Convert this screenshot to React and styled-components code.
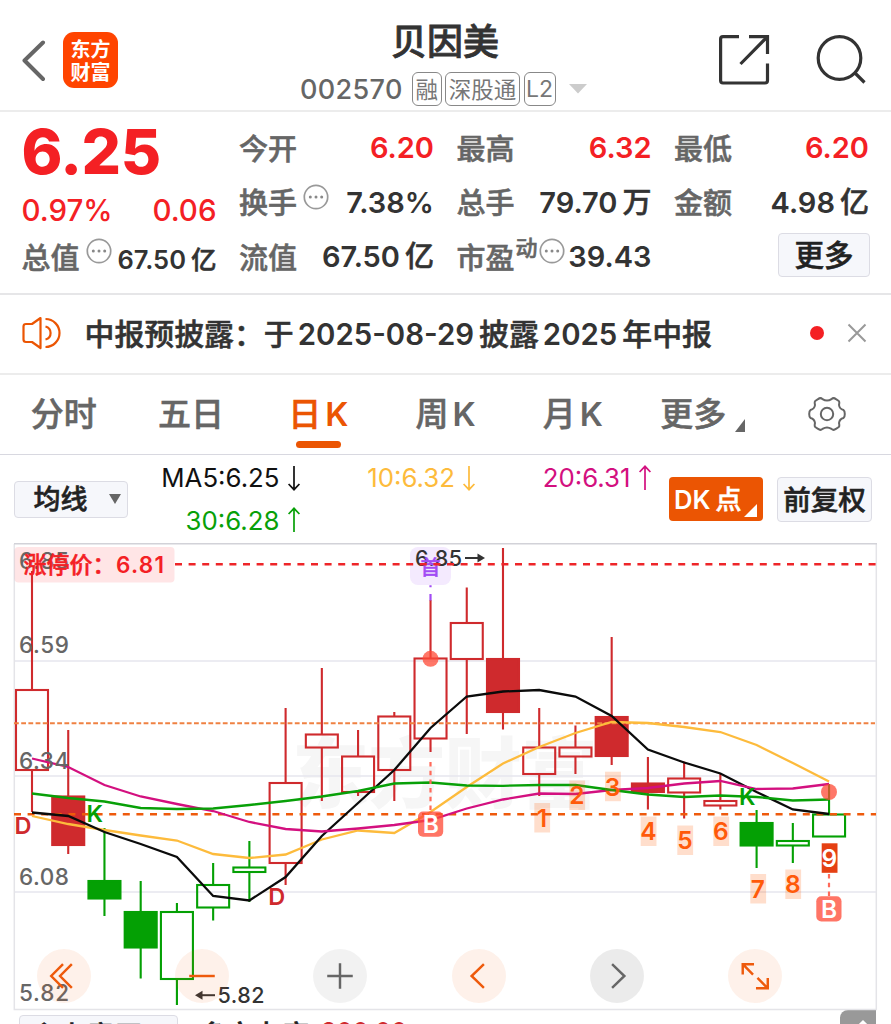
import React from "react";
import styled, { createGlobalStyle, css } from "styled-components";

const RED = "#f42024";
const ORANGE = "#eb5503";
const UP = "#cf2a2d";
const DOWN = "#04a004";

const STEP = 36.23;
const xOf = (i) => 32 + i * STEP;

// high, body top, body bottom, low, colour, filled
const candles = [
  [571, 690, 770, 812, UP, false],
  [730, 796.5, 845, 854, UP, true],
  [828, 881, 898.5, 916, DOWN, true],
  [881, 912, 947.5, 978.5, DOWN, true],
  [903, 912, 979, 1005, DOWN, false],
  [863, 885, 907.5, 920.5, DOWN, false],
  [841, 867.5, 872, 902, DOWN, false],
  [708, 783, 863, 885, UP, false],
  [668, 734.5, 747.5, 801, UP, false],
  [730, 756.5, 792, 796, UP, false],
  [712, 716.5, 770, 801, UP, false],
  [600, 658.5, 738.5, 752, UP, false],
  [587.5, 623, 659, 734, UP, false],
  [548, 659, 712, 729.5, UP, true],
  [708, 747.5, 774, 796, UP, false],
  [725.5, 747.5, 756.5, 774, UP, false],
  [637, 717, 756, 765, UP, true],
  [757, 783.5, 792, 809.5, UP, true],
  [761.5, 778.5, 792.5, 818.5, UP, false],
  [774, 801, 805.5, 809.5, UP, false],
  [810, 823, 845.5, 868, DOWN, true],
  [823, 841, 845.5, 863, DOWN, false],
  [784, 814.5, 836.5, 836.5, DOWN, false],
];

const averages = [
  {
    color: "#fdbb3c",
    points: [
      816, 824, 830, 835.5, 840.5, 854, 858, 854.5, 839.5, 830.5, 833, 812, 787,
      763.5, 747, 733, 722, 723, 727, 732, 745, 763, 781.5,
    ],
  },
  {
    color: "#0b0b0b",
    points: [
      812.5, 816, 832, 844, 857, 896, 900.5, 877, 836, 803, 770, 728, 696.5,
      691.5, 690, 696.5, 716, 749.5, 762.5, 773.5, 792, 809.5, 814,
    ],
  },
  {
    color: "#d3107f",
    points: [
      758.5, 767, 785, 796.5, 804, 811, 822, 829, 831.5, 828.5, 825, 820, 808.5,
      799.5, 793.5, 794, 790, 788, 783.5, 781, 789, 788.5, 784,
    ],
  },
  {
    color: "#08a008",
    points: [
      793.5, 798, 801.5, 808, 809, 808.5, 805, 801, 796.5, 791, 783.5, 782.5,
      785.5, 785.8, 785, 785, 790, 794.5, 797, 795.5, 797, 800.5, 799.5,
    ],
  },
];

// top left corner of each counter box
const counts = [
  [534.3, 803],
  [569.3, 780.5],
  [605, 771.7],
  [640.7, 816.5],
  [677.3, 825.5],
  [713.3, 816.5],
  [750.3, 874],
  [785.3, 869.5],
  [821.7, 843.3],
];

const axis = [
  ["6.85", 568.6],
  ["6.59", 653.2],
  ["6.34", 769.4],
  ["6.08", 885.4],
  ["5.82", 1001.4],
];

const Dots = () => (
  <DotsIcon viewBox="0 0 26 26">
    <circle cx="13" cy="13" r="11.7" fill="none" stroke="#999" strokeWidth="1.7" />
    <circle cx="7.3" cy="13" r="1.5" fill="#888" />
    <circle cx="13" cy="13" r="1.5" fill="#888" />
    <circle cx="18.7" cy="13" r="1.5" fill="#888" />
  </DotsIcon>
);

const Arrow = ({ up }) => (
  <svg width="14" height="26" viewBox="0 0 14 26">
    <path
      d={up ? "M7 25V1.5M1.6 7L7 1.3L12.4 7" : "M7 1V24.5M1.6 19L7 24.7L12.4 19"}
      fill="none"
      stroke="currentColor"
      strokeWidth="1.7"
    />
  </svg>
);

const Header = () => (
  <TopBar>
    <BackIcon viewBox="0 0 24 42">
      <path d="M21 2.5L2.5 20.5L21 39" fill="none" stroke="#666" strokeWidth="4" strokeLinecap="round" strokeLinejoin="round" />
    </BackIcon>
    <Logo>
      <span>东方</span>
      <span>财富</span>
    </Logo>
    <Stock>
      <StockName>贝因美</StockName>
      <CodeRow>
        <Code>002570</Code>
        <Tag $w={29.5}>融</Tag>
        <Tag $w={75}>深股通</Tag>
        <Tag $w={32} $latin>L2</Tag>
        <Caret viewBox="0 0 18 10">
          <path d="M0 0H18L9 9.5Z" fill="#ccc" />
        </Caret>
      </CodeRow>
    </Stock>
    <Actions>
      <svg width="52" height="52" viewBox="0 0 52 52" fill="none" stroke="#333" strokeWidth="3.2">
        <path d="M21 2.6H5Q2.6 2.6 2.6 5V46.5Q2.6 49 5 49H47Q49.5 49 49.5 46.5V29.5" />
        <path d="M31 2.6H49.5V20M48.5 3.6L22.5 30" />
      </svg>
      <svg width="52" height="52" viewBox="0 0 52 52" fill="none" stroke="#333" strokeWidth="3.2">
        <circle cx="23.500" cy="24" r="21.3" />
        <path d="M38.500 38.5L48.500 48.5" />
      </svg>
    </Actions>
  </TopBar>
);

const Quote = () => (
  <QuoteGrid>
    <Column>
      <Price>6.25</Price>
      <Change>
        <span>0.97%</span>
        <span>0.06</span>
      </Change>
      <Cell>
        <Label>总值</Label>
        <Dots />
        <Value $size={25.5} $low>67.50<Unit>亿</Unit></Value>
      </Cell>
    </Column>
    <Column>
      <Cell><Label>今开</Label><Value $red>6.20</Value></Cell>
      <Cell><Label>换手</Label><Dots /><Value>7.38%</Value></Cell>
      <Cell><Label>流值</Label><Value>67.50<Unit>亿</Unit></Value></Cell>
    </Column>
    <Column>
      <Cell><Label>最高</Label><Value $red>6.32</Value></Cell>
      <Cell><Label>总手</Label><Value>79.70<Unit>万</Unit></Value></Cell>
      <Cell>
        <Label>市盈</Label>
        <Super>动</Super>
        <Dots />
        <Value>39.43</Value>
      </Cell>
    </Column>
    <Column>
      <Cell><Label>最低</Label><Value $red>6.20</Value></Cell>
      <Cell><Label>金额</Label><Value>4.98<Unit>亿</Unit></Value></Cell>
      <Cell $end><MoreButton>更多</MoreButton></Cell>
    </Column>
  </QuoteGrid>
);

const Notice = () => (
  <NoticeBar>
    <svg width="40" height="34" viewBox="0 0 40 34" fill="none" stroke={ORANGE} strokeWidth="2.2" strokeLinejoin="round">
      <path d="M18.5 2L10 8H4Q1.5 8 1.5 10.5V23.5Q1.5 26 4 26H10L18.5 32Z" />
      <path d="M23.5 3A14 14 0 0 1 23.5 31M23.5 10.5A6.7 6.7 0 0 1 23.5 23.5" />
    </svg>
    <NoticeText>
      中报预披露：于<Num>2025-08-29</Num>披露<Num>2025</Num>年中报
    </NoticeText>
    <RedDot />
    <svg width="20" height="20" viewBox="0 0 20 20" stroke="#999" strokeWidth="2">
      <path d="M1.5 1.5L18.5 18.5M18.5 1.5L1.5 18.5" />
    </svg>
  </NoticeBar>
);

const Tabs = () => (
  <TabBar>
    <Tab><span>分时</span></Tab>
    <Tab><span>五日</span></Tab>
    <Tab $active><span>日<b>K</b></span></Tab>
    <Tab><span>周<b>K</b></span></Tab>
    <Tab><span>月<b>K</b></span></Tab>
    <Tab $shift={5}>
      <span>更多</span>
      <Corner viewBox="0 0 10 13"><path d="M10 0V13H0Z" fill="#666" /></Corner>
    </Tab>
    <Tab>
      <svg width="38" height="36" viewBox="0 0 38 36" fill="none" stroke="#666" strokeWidth="2">
        <path d="M14.5 3.2Q19 6 23.5 3.2Q25.5 1 28 3.2L30.8 5Q31.7 6.2 31 9Q31.5 13 35.5 14Q36.8 15 36.8 18Q36.8 21 35.5 22Q31.5 23 31 27Q31.7 29.8 30.8 31L28 32.8Q25.5 35 23.5 32.8Q19 30 14.5 32.8Q12.5 35 10 32.8L7.2 31Q6.3 29.8 7 27Q6.5 23 2.5 22Q1.2 21 1.2 18Q1.2 15 2.5 14Q6.5 13 7 9Q6.3 6.2 7.2 5L10 3.2Q12.5 1 14.5 3.2Z" strokeLinejoin="round" />
        <circle cx="19" cy="18" r="6.2" />
      </svg>
    </Tab>
  </TabBar>
);

const Indicators = () => (
  <IndicatorBar>
    <Select>
      <span>均线</span>
      <svg width="12" height="10" viewBox="0 0 12 10"><path d="M0 0H12L6 10Z" fill="#666" /></svg>
    </Select>
    <Averages>
      <Average $color="#111">MA5:6.25<Arrow /></Average>
      <Average $color="#fdbb3c">10:6.32<Arrow /></Average>
      <Average $color="#d3107f">20:6.31<Arrow up /></Average>
      <Average $color="#08a008">30:6.28<Arrow up /></Average>
    </Averages>
    <DkButton>
      <Num>DK</Num>点
      <DkCorner viewBox="0 0 13 13"><path d="M13 0V13H0Z" fill="#fff" /></DkCorner>
    </DkButton>
    <AdjustButton>前复权</AdjustButton>
  </IndicatorBar>
);

const Candle = ({ x, data }) => {
  const [high, top, bottom, low, color, filled] = data;
  return (
    <g stroke={color} strokeWidth="2.1">
      <path d={`M${x} ${high}V${top}M${x} ${bottom}V${low}`} />
      <rect
        x={x - 16}
        y={top}
        width="32"
        height={bottom - top}
        fill={filled ? color : "none"}
      />
    </g>
  );
};

const Chart = () => (
  <Canvas viewBox="0 543 891 469">
    <Watermark x="292" y="802" textLength="306">东方财富</Watermark>
    <g fill="none" strokeWidth="1.5">
      <path d="M14 661H876M14 776H876M14 892H876" stroke="#e6e6ee" />
      <path d="M14.3 544V1009.6H876.3V544" stroke="#e4e4e8" />
      <path d="M14 543.8H877" stroke="#d2d2d8" />
    </g>
    <rect x="410" y="547" width="41" height="38" rx="8" fill="#f4eafe" />
    {candles.map((c, i) => (
      <Candle key={i} x={xOf(i)} data={c} />
    ))}
    <path d="M14 723.3H875" stroke="#ef8142" strokeWidth="2" strokeDasharray="4.8 2.4" />
    <path d="M14 814.3H876" stroke="#ee5a0c" strokeWidth="2.4" strokeDasharray="7 6.6" />
    {averages.map((a) => (
      <polyline
        key={a.color}
        points={a.points.map((y, i) => `${xOf(i)},${y}`).join(" ")}
        fill="none"
        stroke={a.color}
        strokeWidth="2.3"
      />
    ))}

    <rect x="14.5" y="547" width="160" height="35.5" rx="4" fill="#fc2a35" fillOpacity=".12" />
    {axis.map(([label, y]) => (
      <Figure key={label} x="19" y={y} textLength="50" $size={22.5} fill="#666">{label}</Figure>
    ))}
    <LimitText x="23.5" y="573">涨停价：</LimitText>
    <Figure x="116" y="573" textLength="48" $size={22.5} $weight={600} fill={RED}>6.81</Figure>
    <Figure x="415" y="565.8" textLength="47" $size={21.5} fill="#333">6.85</Figure>
    <path d="M465 558H482" stroke="#333" strokeWidth="2" />
    <path d="M485 558L477.5 553.5V562.5Z" fill="#333" />
    <FirstMark x="430.5" y="575">首</FirstMark>
    <path d="M175 564.3H876" stroke="#ee2529" strokeWidth="2.5" strokeDasharray="7 6.6" />
    <path d="M430.5 585.2V587.2M430.5 594V600.5" stroke="#a24cf4" strokeWidth="2.2" />

    <path d="M430.5 762V811M829 874V896" stroke="#ff6a5a" strokeWidth="2.2" strokeDasharray="4.5 4.2" />
    <circle cx="430.5" cy="658.8" r="8" fill="#ff4a36" fillOpacity=".75" />
    <circle cx="829" cy="792" r="8" fill="#ff4a36" fillOpacity=".75" />
    {[[418, 811.5], [816.3, 896.3]].map(([x, y]) => (
      <g key={x}>
        <rect x={x} y={y} width="25.2" height="25.2" rx="5" fill="#ff4a36" fillOpacity=".76" />
        <Figure x={x + 12.8} y={y + 21.5} $size={24.5} $weight={600} textAnchor="middle" fill="#fff">B</Figure>
      </g>
    ))}
    {counts.map(([x, y], i) => (
      <g key={i}>
        <rect x={x} y={y} width="15.8" height="29.5" fill={i === 8 ? "#e54013" : "#ff5c00"} fillOpacity={i === 8 ? 1 : 0.2} />
        <Figure x={x + 7.6} y={y + 23.8} $size={24.5} $weight={600} textAnchor="middle" fill={i === 8 ? "#fff" : "#ff5a0a"}>
          {i + 1}
        </Figure>
      </g>
    ))}
    <Figure x="14.5" y="833.5" $size={23.5} $weight={600} fill={UP}>D</Figure>
    <Figure x="268.3" y="904.5" $size={23.5} $weight={600} fill={UP}>D</Figure>
    <Figure x="86.5" y="822.3" $size={23.5} $weight={600} fill={DOWN}>K</Figure>
    <Figure x="739" y="804.5" $size={23.5} $weight={600} fill={DOWN}>K</Figure>
    <path d="M198 995.2H215" stroke="#333" strokeWidth="2" />
    <path d="M195 995.2L202.5 990.7V999.7Z" fill="#333" />
    <Figure x="217.5" y="1002.7" textLength="47" $size={21.5} fill="#333">5.82</Figure>
  </Canvas>
);

const controls = [
  { d: "M26.5 15.5L14.5 27.5L26.5 39.5M35.5 15.5L23.5 27.5L35.5 39.5" },
  { d: "M14.5 27.5H40.5" },
  { d: "M14.5 27.5H40.5M27.5 14.5V40.5", grey: true },
  { d: "M32.5 15.5L20 27.5L32.5 39.5" },
  { d: "M22.5 15.5L35 27.5L22.5 39.5", grey: true, dark: true },
  { d: "M15 26V15.5H26.5M15 15.5L25.5 26M40.5 29.5V40H28.5M40.5 40L30 29.5" },
];

const App = () => (
  <>
    <GlobalStyle />
    <Page>
      <Header />
      <Quote />
      <Notice />
      <Tabs />
      <Indicators />
      <ChartArea>
        <Chart />
        <Controls>
          {controls.map((c) => (
            <Round key={c.d} $grey={c.grey} $dark={c.dark}>
              <svg width="54" height="54" viewBox="0 0 55 55">
                <path d={c.d} fill="none" stroke="currentColor" strokeWidth="2.5" />
              </svg>
            </Round>
          ))}
        </Controls>
      </ChartArea>
      <Footer>
        <FooterSelect>主力意愿</FooterSelect>
        <FooterText>多空力度</FooterText>
        <FooterValue>200.00</FooterValue>
        <FooterToggle>
          <svg width="20" height="12" viewBox="0 0 20 12"><path d="M2 11L10 3L18 11" fill="none" stroke="#fff" strokeWidth="3" /></svg>
        </FooterToggle>
      </Footer>
    </Page>
  </>
);

const GlobalStyle = createGlobalStyle`
  * {
    box-sizing: border-box;
  }
  body {
    margin: 0;
    background: #fff;
    font-family: Inter, "Noto Sans CJK SC", sans-serif;
    font-weight: 500;
    color: #333;
    overflow: hidden;
  }
  svg {
    display: block;
    flex-shrink: 0;
  }
`;

// the CJK family has no medium cut, a thin stroke gives the weight
const cjk = css`
  font-family: "Noto Sans CJK SC", sans-serif;
  -webkit-text-stroke: 0.55px currentColor;
`;

const Page = styled.div`
  width: 891px;
  height: 1024px;
  overflow: hidden;
  white-space: nowrap;
`;

const TopBar = styled.header`
  display: flex;
  height: 112px;
  border-bottom: 2px solid #ececec;
  padding-left: 22px;
`;

const BackIcon = styled.svg`
  width: 24px;
  height: 42px;
  margin-top: 40px;
`;

const Logo = styled.div`
  display: flex;
  flex-direction: column;
  align-items: center;
  justify-content: center;
  width: 55px;
  height: 56px;
  margin: 32px 0 0 17px;
  border-radius: 11px;
  background: #ff4400;
  color: #fff;
  font-family: "Noto Sans CJK SC", sans-serif;
  font-size: 20px;
  font-weight: 700;
  line-height: 23px;
`;

const Stock = styled.div`
  display: flex;
  flex-direction: column;
  width: 290px;
  margin-left: 182px;
`;

const StockName = styled.div`
  ${cjk}
  height: 53px;
  margin: 14px 0 0 91px;
  font-size: 36px;
  line-height: 50px;
  -webkit-text-stroke-width: 0.8px;
`;

const CodeRow = styled.div`
  display: flex;
  align-items: center;
  height: 36px;
  margin-top: 4px;
`;

const Code = styled.div`
  width: 109px;
  margin-right: 3px;
  color: #666;
  font-size: 27px;
  letter-spacing: 0.35px;
`;

const Tag = styled.span`
  display: flex;
  justify-content: center;
  flex-shrink: 0;
  width: ${(p) => p.$w}px;
  height: 34px;
  margin-right: 3.5px;
  border: 1.5px solid #888;
  border-radius: 6px;
  color: #777;
  font-family: ${(p) => (p.$latin ? "Inter" : '"Noto Sans CJK SC"')}, sans-serif;
  font-size: ${(p) => (p.$latin ? 23 : 22.5)}px;
  font-weight: 400;
  line-height: ${(p) => (p.$latin ? 33 : 30)}px;
`;

const Caret = styled.svg`
  width: 18px;
  height: 10px;
  margin-left: 10px;
`;

const Actions = styled.div`
  display: flex;
  gap: 46px;
  margin: 34px 0 0 128px;
`;

const QuoteGrid = styled.section`
  display: grid;
  grid-template-columns: repeat(4, 195px);
  column-gap: 22.5px;
  height: 183px;
  padding: 9px 0 0 21.5px;
  border-bottom: 2px solid #e6e6e8;
`;

const Column = styled.div`
  display: flex;
  flex-direction: column;
`;

const Cell = styled.div`
  display: flex;
  align-items: center;
  justify-content: ${(p) => (p.$end ? "flex-end" : "flex-start")};
  height: 54.5px;
`;

const Label = styled.span`
  ${cjk}
  margin-top: -3px;
  color: #666;
  font-size: 29px;
  line-height: 40px;
`;

const Value = styled.span`
  margin-left: auto;
  padding-top: ${(p) => (p.$low ? 5 : 0)}px;
  color: ${(p) => (p.$red ? RED : "#333")};
  font-size: ${(p) => p.$size || 29}px;
  font-weight: 600;
  line-height: 40px;
`;

const Unit = styled.span`
  ${cjk}
  margin-left: 5px;
  font-weight: 500;
  line-height: 0;
`;

const Super = styled.span`
  ${cjk}
  margin: -22px 1px 0 1px;
  color: #666;
  font-size: 22px;
`;

const DotsIcon = styled.svg`
  width: 26px;
  height: 26px;
  margin: -12px 0 0 6px;

  ${Super} + & {
    margin-left: 0;
  }
`;

const Price = styled.div`
  height: 62px;
  color: ${RED};
  font-size: 62px;
  font-weight: 800;
  line-height: 62px;
  letter-spacing: -0.5px;
`;

const Change = styled.div`
  display: flex;
  justify-content: space-between;
  height: 47px;
  padding-top: 7px;
  color: ${RED};
  font-size: 29.5px;
  line-height: 40px;
`;

const MoreButton = styled.button`
  ${cjk}
  width: 92px;
  height: 44px;
  padding: 0 0 4px;
  margin: -5px -1px 0 0;
  border: 1.5px solid #dcdce4;
  border-radius: 4px;
  background: #f6f7fb;
  color: #222;
  font-size: 29.5px;
  font-weight: 500;
  line-height: 36px;
`;

const NoticeBar = styled.section`
  display: flex;
  align-items: center;
  height: 80px;
  padding: 0 24px 2px 22px;
  border-bottom: 2px solid #ececec;
`;

const NoticeText = styled.div`
  ${cjk}
  flex: 1;
  margin: -3px 0 0 22.5px;
  font-size: 29.9px;
  line-height: 44px;
`;

const Num = styled.span`
  margin: 0 5px 0 4px;
  font-family: Inter, sans-serif;
  font-size: 0.983em;
  font-weight: 600;
  line-height: 0;
  -webkit-text-stroke-width: 0;
`;

const RedDot = styled.i`
  width: 14px;
  height: 14px;
  margin-right: 23px;
  border-radius: 50%;
  background: ${RED};
`;

const TabBar = styled.nav`
  display: grid;
  grid-template-columns: repeat(7, 127.3px);
  height: 79.5px;
  border-bottom: 1.5px solid #d8d8e0;
`;

const Tab = styled.div`
  ${cjk}
  position: relative;
  display: flex;
  align-items: center;
  justify-content: center;
  padding-left: ${(p) => p.$shift || 0}px;
  color: ${(p) => (p.$active ? ORANGE : "#666")};
  font-size: 33px;

  span {
    margin-top: -4px;
    line-height: 48px;
  }

  b {
    margin-left: 4px;
    font-family: Inter, sans-serif;
    font-weight: 600;
    line-height: 0;
    -webkit-text-stroke-width: 0;
  }

  &::after {
    content: "";
    position: absolute;
    bottom: 6px;
    width: 45px;
    height: 7px;
    border-radius: 4px;
    background: ${(p) => (p.$active ? ORANGE : "transparent")};
  }
`;

const Corner = styled.svg`
  width: 10px;
  height: 13px;
  margin: 22px 0 0 9px;
`;

const IndicatorBar = styled.section`
  display: flex;
  height: 88.5px;
  padding-left: 13.5px;
`;

const Select = styled.div`
  ${cjk}
  display: flex;
  align-items: center;
  justify-content: space-between;
  width: 114px;
  height: 37px;
  margin-top: 26px;
  padding: 0 6px 0 19px;
  border: 1.5px solid #dcdce4;
  border-radius: 4px;
  background: #f6f7fb;
  color: #222;
  font-size: 27px;
  line-height: 34px;

  span {
    margin-top: -2px;
  }
`;

const Averages = styled.div`
  display: grid;
  grid-template-columns: repeat(3, 175.5px);
  grid-auto-rows: 42.5px;
  margin-left: -2.5px;
  padding-top: 2px;
`;

const Average = styled.div`
  display: flex;
  align-items: center;
  justify-content: flex-end;
  gap: 7px;
  color: ${(p) => p.$color};
  font-size: 25.8px;
  font-weight: 400;
`;

const DkButton = styled.div`
  ${cjk}
  position: relative;
  width: 94px;
  height: 44px;
  margin: 22.5px 0 0 17.5px;
  padding-left: 1px;
  border-radius: 4px;
  background: ${ORANGE};
  color: #fff;
  font-size: 26px;
  line-height: 41px;
`;

const DkCorner = styled.svg`
  position: absolute;
  right: 6px;
  bottom: 4px;
  width: 13px;
  height: 13px;
`;

const AdjustButton = styled.div`
  ${cjk}
  width: 95px;
  height: 45px;
  margin: 22px 0 0 14px;
  border: 1.5px solid #dcdce4;
  border-radius: 4px;
  background: #f6f7fb;
  color: #222;
  font-size: 27.5px;
  line-height: 40px;
  text-align: center;
`;

const ChartArea = styled.section`
  position: relative;
  height: 469px;
`;

const Canvas = styled.svg`
  width: 891px;
  height: 469px;
`;

const Figure = styled.text`
  font-family: Inter, sans-serif;
  font-size: ${(p) => p.$size}px;
  font-weight: ${(p) => p.$weight || 500};
`;

const LimitText = styled.text`
  font-family: "Noto Sans CJK SC", sans-serif;
  fill: ${RED};
  stroke: ${RED};
  stroke-width: 0.5px;
  font-size: 23px;
  font-weight: 500;
`;

const FirstMark = styled.text`
  font-family: "Noto Sans CJK SC", sans-serif;
  fill: #a24cf4;
  stroke: #a24cf4;
  stroke-width: 0.4px;
  font-size: 20px;
  font-weight: 500;
  text-anchor: middle;
`;

const Watermark = styled.text`
  font-family: "Noto Sans CJK SC", sans-serif;
  fill: #f6f6f6;
  font-size: 77px;
  font-weight: 900;
`;

const Controls = styled.div`
  position: absolute;
  left: 37px;
  bottom: 9px;
  display: flex;
  gap: 84.2px;
`;

const Round = styled.button`
  width: 54px;
  height: 54px;
  padding: 0;
  border: 0;
  border-radius: 50%;
  background: ${(p) =>
    p.$dark ? "rgba(0, 0, 0, 0.08)" : p.$grey ? "rgba(0, 0, 0, 0.05)" : "rgba(240, 90, 10, 0.085)"};
  color: ${(p) => (p.$grey ? "#666" : "#ee5a0c")};
`;

const Footer = styled.footer`
  display: flex;
  padding-left: 19px;
`;

const FooterSelect = styled.div`
  ${cjk}
  width: 159px;
  height: 40px;
  margin-top: 3px;
  padding-left: 12px;
  border: 1.5px solid #dcdce4;
  border-radius: 4px;
  background: #f6f7fb;
  color: #222;
  font-size: 27.5px;
  line-height: 36px;
`;

const FooterText = styled.div`
  ${cjk}
  margin: 3px 0 0 21px;
  color: #222;
  font-size: 27.5px;
  line-height: 37px;
`;

const FooterValue = styled.div`
  margin: 5px 0 0 12px;
  color: ${UP};
  font-size: 25px;
  line-height: 30px;
`;

const FooterToggle = styled.div`
  display: flex;
  justify-content: center;
  width: 36px;
  height: 40px;
  margin: -2px 15px 0 auto;
  padding: 9px 0 0 9px;
  border-radius: 8px 0 0 0;
  background: #999;
`;

export default App;
